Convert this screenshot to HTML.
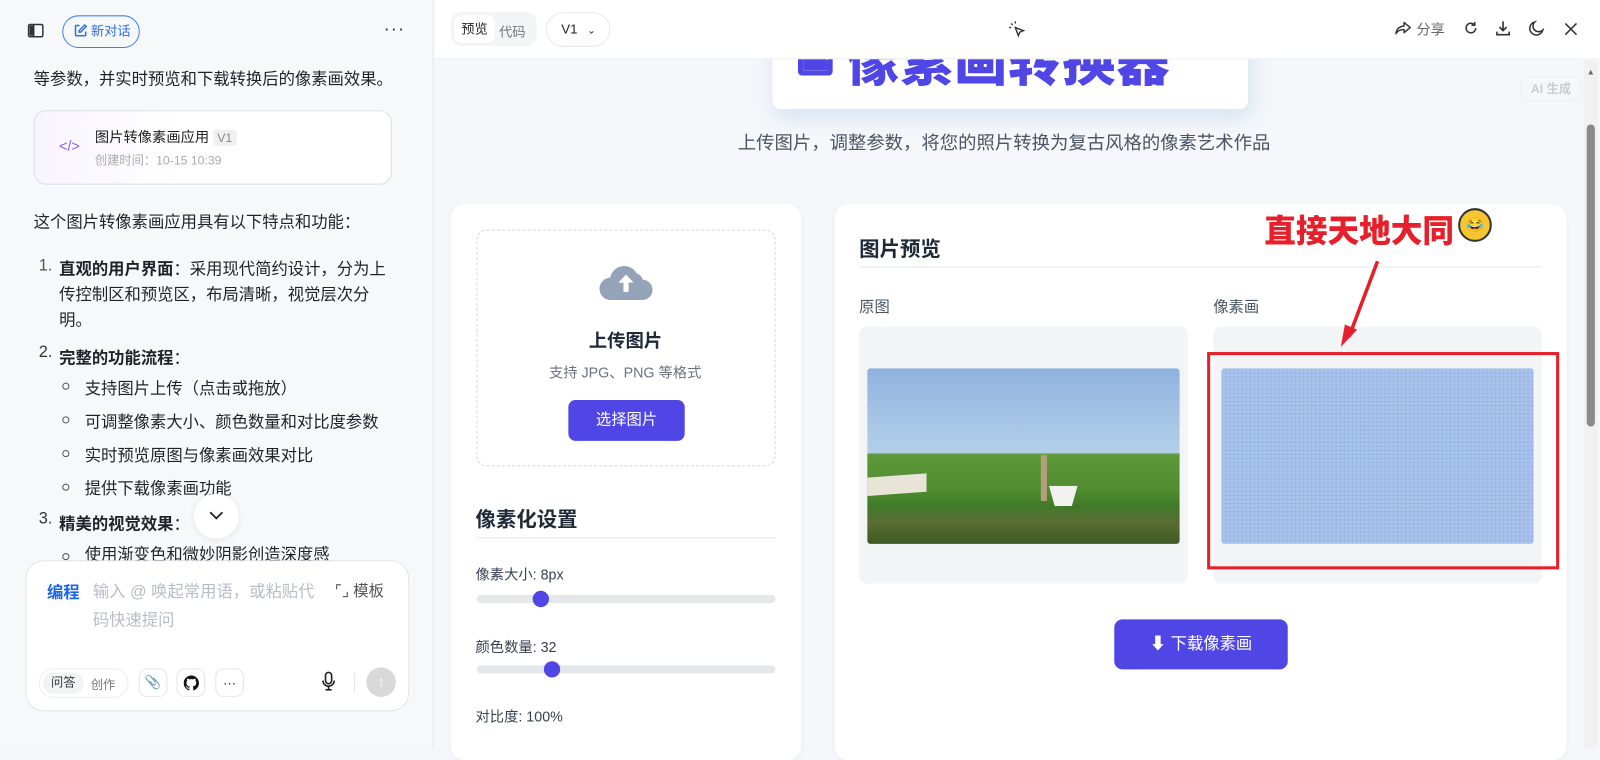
<!DOCTYPE html>
<html><head><meta charset="utf-8"><style>
*{margin:0;padding:0;box-sizing:border-box}
body{width:1600px;height:733px;overflow:hidden;position:relative;background:#f5f7fa;font-family:"Liberation Sans","Noto Sans CJK SC",sans-serif;color:#1f2329}
#w{position:absolute;left:0;top:0;width:1568px;height:720px;transform:scale(1.0204);transform-origin:0 0}
.a{position:absolute;white-space:nowrap}
.lp{position:absolute;left:0;top:0;width:425px;height:733px;background:#f7f8fa;border-right:1px solid #e5e7eb}
.t16{font-size:16px;color:#1f2329}
b{font-weight:700}
.dot{position:absolute;width:7px;height:7px;border:1.3px solid #555;border-radius:50%}
.ib{position:absolute;top:655px;width:28px;height:28px;border:1px solid #e5e6eb;border-radius:8px;background:#fff;display:flex;align-items:center;justify-content:center;font-size:13px}
.card{position:absolute;background:#fff;border-radius:14px;box-shadow:0 2px 8px rgba(0,0,0,.04)}
.track{position:absolute;left:467px;width:293px;height:8px;border-radius:4px;background:#e5e7eb}
.knob{position:absolute;width:16px;height:16px;border-radius:50%;background:#4f46e5}
</style></head><body><div id="w">
<div class="lp">
  <svg class="a" style="left:27px;top:23px" width="16" height="14" viewBox="0 0 16 14"><rect x="1" y="1" width="14" height="12" rx="1.5" fill="none" stroke="#333" stroke-width="1.5"/><line x1="6" y1="1" x2="6" y2="13" stroke="#333" stroke-width="1.5"/><rect x="2" y="2" width="3.5" height="10" fill="#333"/></svg>
  <div class="a" style="left:61px;top:15px;width:76px;height:32px;border:1.3px solid #3b82f6;border-radius:16px;color:#2f6fe8;font-size:13px;line-height:30px;padding-left:27px">新对话</div>
  <svg class="a" style="left:72px;top:23px" width="14" height="14" viewBox="0 0 14 14"><path d="M6 2H3a1 1 0 0 0-1 1v8a1 1 0 0 0 1 1h8a1 1 0 0 0 1-1V8" fill="none" stroke="#2f6fe8" stroke-width="1.5"/><path d="M11 1.5l1.5 1.5L7 8.5H5.5V7z" fill="none" stroke="#2f6fe8" stroke-width="1.4"/></svg>
  <div class="a" style="left:376px;top:18px;font-size:18px;letter-spacing:1px;color:#333">···</div>
  <div class="a t16" style="left:33px;top:64px">等参数，并实时预览和下载转换后的像素画效果。</div>
  <div class="a" style="left:33px;top:108px;width:351px;height:73px;border:1px solid #dcdfe6;border-radius:12px;background:linear-gradient(90deg,#f8f4ff,#fff 40%)"></div>
  <div class="a" style="left:58px;top:135px;color:#8b5cf6;font-size:14px">&lt;/&gt;</div>
  <div class="a" style="left:93px;top:124px;font-size:14px;color:#222">图片转像素画应用 <span style="background:#f0f0f0;color:#888;font-size:12px;padding:1px 4px;border-radius:3px">V1</span></div>
  <div class="a" style="left:93px;top:148px;font-size:12px;color:#aaa">创建时间：10-15 10:39</div>
  <div class="a t16" style="left:33px;top:204px">这个图片转像素画应用具有以下特点和功能：</div>
  <div class="a t16" style="left:38px;top:252px;color:#555">1.</div>
  <div class="a t16" style="left:58px;top:252px;line-height:25px"><b>直观的用户界面</b>：采用现代简约设计，分为上<br>传控制区和预览区，布局清晰，视觉层次分<br>明。</div>
  <div class="a t16" style="left:38px;top:337px;color:#333">2.</div>
  <div class="a t16" style="left:58px;top:337px"><b>完整的功能流程</b>：</div>
  <div class="dot" style="left:61px;top:375px"></div><div class="a t16" style="left:83px;top:367px">支持图片上传（点击或拖放）</div>
  <div class="dot" style="left:61px;top:408px"></div><div class="a t16" style="left:83px;top:400px">可调整像素大小、颜色数量和对比度参数</div>
  <div class="dot" style="left:61px;top:441px"></div><div class="a t16" style="left:83px;top:433px">实时预览原图与像素画效果对比</div>
  <div class="dot" style="left:61px;top:474px"></div><div class="a t16" style="left:83px;top:465px">提供下载像素画功能</div>
  <div class="a t16" style="left:38px;top:500px;color:#333">3.</div>
  <div class="a t16" style="left:58px;top:500px"><b>精美的视觉效果</b>：</div>
  <div class="a" style="left:190px;top:484px;width:44px;height:44px;border-radius:50%;background:#fff;box-shadow:0 1px 6px rgba(0,0,0,.08)"></div>
  <svg class="a" style="left:204px;top:500px" width="16" height="10" viewBox="0 0 16 10"><path d="M2 2l6 6 6-6" fill="none" stroke="#222" stroke-width="1.8"/></svg>
  <div class="dot" style="left:61px;top:542px"></div><div class="a t16" style="left:83px;top:530px">使用渐变色和微妙阴影创造深度感</div>
  <div class="a" style="left:25px;top:549px;width:376px;height:148px;background:#fff;border:1px solid #e3e5ea;border-radius:18px"></div>
  <div class="a" style="left:46px;top:567px;font-size:16px;font-weight:700;color:#1a66e8">编程</div>
  <div class="a" style="left:91px;top:567px;font-size:16px;color:#b8bcc4;line-height:28px">输入 @ 唤起常用语，或粘贴代<br>码快速提问</div>
  <div class="a" style="left:328px;top:568px;font-size:15px;color:#555">⌜⌟ 模板</div>
  <div class="a" style="left:38px;top:655px;width:88px;height:29px;border:1px solid #eee;border-radius:15px;background:#fff"></div>
  <div class="a" style="left:42px;top:659px;width:40px;height:21px;border-radius:11px;background:#f2f3f5;font-size:12px;line-height:21px;text-align:center;color:#333">问答</div>
  <div class="a" style="left:89px;top:662px;font-size:12px;color:#777">创作</div>
  <div class="ib" style="left:136px">📎</div>
  <div class="ib" style="left:173px"><svg width="15" height="15" viewBox="0 0 16 16"><path fill="#111" d="M8 0C3.6 0 0 3.6 0 8c0 3.5 2.3 6.5 5.5 7.6.4.1.5-.2.5-.4v-1.4c-2.2.5-2.7-1-2.7-1-.4-.9-.9-1.200-.9-1.2-.7-.5.1-.5.1-.5.8.1 1.2.8 1.2.8.7 1.3 1.9.9 2.3.7.1-.5.3-.9.5-1.1-1.8-.2-3.600-.9-3.6-4 0-.9.3-1.600.8-2.1-.1-.2-.4-1 .1-2.1 0 0 .7-.2 2.2.8.6-.2 1.3-.3 2-.3s1.4.1 2 .3c1.5-1 2.2-.8 2.2-.8.4 1.1.2 1.9.1 2.1.5.6.8 1.3.8 2.1 0 3.1-1.9 3.7-3.6 3.9.3.3.5.8.5 1.5v2.2c0 .2.1.5.6.4C13.7 14.5 16 11.5 16 8c0-4.4-3.6-8-8-8z"/></svg></div>
  <div class="ib" style="left:211px">···</div>
  <svg class="a" style="left:315px;top:658px" width="14" height="20" viewBox="0 0 14 20"><rect x="4" y="1" width="6" height="11" rx="3" fill="none" stroke="#222" stroke-width="1.6"/><path d="M1.5 9a5.5 5.5 0 0 0 11 0M7 14.5V18M4 18h6" fill="none" stroke="#222" stroke-width="1.6"/></svg>
  <div class="a" style="left:347px;top:659px;width:1px;height:20px;background:#e5e5e5"></div>
  <div class="a" style="left:359px;top:654px;width:29px;height:29px;border-radius:50%;background:#d9d9d9;color:#fff;text-align:center;line-height:29px;font-size:14px">↑</div>
</div>

<div class="a" style="left:757px;top:10px;width:466px;height:97px;background:#fff;border-radius:0 0 8px 8px;box-shadow:0 8px 20px rgba(99,102,241,.12),8px 8px 20px rgba(52,211,153,.08);overflow:hidden">
  <div class="a" style="left:25px;top:30px;width:34px;height:34px;border:5px solid #4f46e5;border-radius:4px"></div>
  <div class="a" style="left:30px;top:42px;width:24px;height:17px;background:#4f46e5;clip-path:polygon(0 100%,0 30%,40% 0,100% 40%,100% 100%)"></div>
  <div class="a" style="left:72px;top:9px;font-size:52px;font-weight:900;color:#4f46e5;letter-spacing:1px">像素画转换器</div>
</div>

<div class="a" style="left:426px;top:0;width:1174px;height:58px;background:#fff;border-bottom:1px solid #eef0f3"></div>
<div class="a" style="left:442px;top:12px;width:84px;height:33px;border-radius:10px;background:#f3f4f6"></div>
<div class="a" style="left:445px;top:15px;width:40px;height:27px;border-radius:8px;background:#fff;font-size:13px;line-height:27px;text-align:center;color:#222">预览</div>
<div class="a" style="left:489px;top:21px;font-size:13px;color:#777">代码</div>
<div class="a" style="left:535px;top:12px;width:63px;height:34px;border:1px solid #e8e8e8;border-radius:17px;font-size:13px;line-height:32px;padding-left:14px;color:#222">V1 <span style="font-size:10px;margin-left:6px">⌄</span></div>
<svg class="a" style="left:988px;top:20px" width="18" height="18" viewBox="0 0 18 18"><path d="M7 7l8 3-3.5 1.5L10 15z" fill="none" stroke="#333" stroke-width="1.4"/><path d="M3 3l1.5 1.5M7 1v2M1 7h2" stroke="#333" stroke-width="1.3"/></svg>
<svg class="a" style="left:1367px;top:21px" width="16" height="14" viewBox="0 0 16 14"><path d="M9 1l6 5-6 5V8C5 8 3 9 1 12c.5-4 3-7 8-7.5z" fill="none" stroke="#333" stroke-width="1.4" stroke-linejoin="round"/></svg>
<div class="a" style="left:1388px;top:19px;font-size:14px;color:#666">分享</div>
<svg class="a" style="left:1434px;top:20px" width="15" height="15" viewBox="0 0 16 16"><path d="M13 8a5 5 0 1 1-1.5-3.6M12 1.5V5H8.5" fill="none" stroke="#333" stroke-width="1.6"/></svg>
<svg class="a" style="left:1465px;top:20px" width="16" height="16" viewBox="0 0 16 16"><path d="M8 1v9M4.5 6.5L8 10l3.5-3.5M2 11v3h12v-3" fill="none" stroke="#333" stroke-width="1.6"/></svg>
<svg class="a" style="left:1498px;top:20px" width="16" height="16" viewBox="0 0 16 16"><path d="M6 1.5a6.5 6.5 0 1 0 8 8A5.5 5.5 0 0 1 6 1.5z" fill="none" stroke="#333" stroke-width="1.5"/></svg>
<svg class="a" style="left:1533px;top:22px" width="13" height="13" viewBox="0 0 13 13"><path d="M1 1l11 11M12 1L1 12" stroke="#333" stroke-width="1.5"/></svg>

<div class="a" style="left:1552px;top:59px;width:14px;height:674px;background:#f1f1f1"></div>
<div class="a" style="left:1555px;top:66px;font-size:8px;color:#666">▲</div>
<div class="a" style="left:1555px;top:122px;width:8px;height:296px;border-radius:4px;background:#8a8a8a"></div>
<div class="a" style="left:1490px;top:75px;width:60px;height:24px;border:1px solid #eee;border-radius:8px;font-size:12px;color:#ccc;text-align:center;line-height:22px;font-weight:700">AI 生成</div>

<div class="a" style="left:723px;top:126px;font-size:18px;color:#4b5563">上传图片，调整参数，将您的照片转换为复古风格的像素艺术作品</div>

<div class="card" style="left:442px;top:200px;width:343px;height:545px"></div>
<div class="a" style="left:467px;top:225px;width:293px;height:232px;border:1.5px dashed #d1d5db;border-radius:10px"></div>
<svg class="a" style="left:587px;top:260px" width="53" height="34" viewBox="0 0 53 34"><path d="M12 34a11 11 0 0 1-1-22A14 14 0 0 1 37 8a9 9 0 0 1 6 6 10 10 0 0 1-1 20z" fill="#94a3b8"/><path d="M26.5 9L19 17h5v9h5v-9h5z" fill="#fff"/></svg>
<div class="a" style="left:577px;top:320px;font-size:18px;font-weight:700;color:#1f2937">上传图片</div>
<div class="a" style="left:538px;top:355px;font-size:14px;color:#6b7280">支持 JPG、PNG 等格式</div>
<div class="a" style="left:557px;top:392px;width:114px;height:40px;border-radius:7px;background:#4f46e5;color:#fff;font-size:15px;text-align:center;line-height:40px">选择图片</div>
<div class="a" style="left:466px;top:493px;font-size:20px;font-weight:700;color:#1f2937">像素化设置</div>
<div class="a" style="left:467px;top:526px;width:293px;height:2px;background:#eef0f3"></div>
<div class="a" style="left:466px;top:553px;font-size:14px;color:#374151">像素大小: 8px</div>
<div class="track" style="top:583px"></div><div class="knob" style="left:522px;top:579px"></div>
<div class="a" style="left:466px;top:624px;font-size:14px;color:#374151">颜色数量: 32</div>
<div class="track" style="top:652px"></div><div class="knob" style="left:533px;top:648px"></div>
<div class="a" style="left:466px;top:692px;font-size:14px;color:#374151">对比度: 100%</div>

<div class="card" style="left:818px;top:200px;width:717px;height:545px"></div>
<div class="a" style="left:842px;top:228px;font-size:20px;font-weight:700;color:#1f2937">图片预览</div>
<div class="a" style="left:842px;top:261px;width:669px;height:1px;background:#e5e7eb"></div>
<div class="a" style="left:842px;top:290px;font-size:15px;color:#4b5563">原图</div>
<div class="a" style="left:1189px;top:290px;font-size:15px;color:#4b5563">像素画</div>
<div class="a" style="left:842px;top:320px;width:322px;height:252px;border-radius:8px;background:#f3f4f6"></div>
<div class="a" style="left:1189px;top:320px;width:322px;height:252px;border-radius:8px;background:#f3f4f6"></div>
<div class="a" style="left:850px;top:361px;width:306px;height:172px;border-radius:3px;overflow:hidden;background:linear-gradient(180deg,#8fb2df 0%,#b4cfe9 48%,#5f9a3c 49%,#4f8c2f 70%,#3f7a28 78%,#5a6d32 88%,#3d5a24 100%)">
  <div class="a" style="left:0;top:105px;width:58px;height:18px;background:#e8e4d8;transform:skewY(-4deg)"></div>
  <div class="a" style="left:178px;top:115px;width:28px;height:20px;background:#f2f2f0;clip-path:polygon(0 0,100% 0,80% 100%,20% 100%)"></div>
  <div class="a" style="left:170px;top:85px;width:6px;height:45px;background:#b59f7a"></div>
</div>
<div class="a" style="left:1197px;top:361px;width:306px;height:172px;border-radius:3px;background-color:#a9c4ec;background-image:linear-gradient(rgba(140,170,220,.5) 1px,transparent 1px),linear-gradient(90deg,rgba(140,170,220,.5) 1px,transparent 1px);background-size:4px 4px"></div>
<div class="a" style="left:1183px;top:345px;width:345px;height:213px;border:3px solid #e5202a"></div>
<svg class="a" style="left:1300px;top:250px" width="60" height="95" viewBox="0 0 60 95"><path d="M50 6L22 80" stroke="#e5202a" stroke-width="3.5"/><path d="M14 90l4-22 12 5z" fill="#e5202a"/></svg>
<div class="a" style="left:1239px;top:201px;font-size:31px;font-weight:900;color:#e5202a;text-shadow:-1px -1px 0 #fff,1px -1px 0 #fff,-1px 1px 0 #fff,1px 1px 0 #fff">直接天地大同</div>
<div class="a" style="left:1429px;top:204px;width:33px;height:33px;border-radius:50%;background:#f6c532;border:2px solid #333;font-size:14px;text-align:center;line-height:29px">😂</div>
<div class="a" style="left:1092px;top:607px;width:170px;height:49px;border-radius:8px;background:#4f46e5;color:#fff;font-size:16px;text-align:center;line-height:49px">⬇ 下载像素画</div>
</div></body></html>
